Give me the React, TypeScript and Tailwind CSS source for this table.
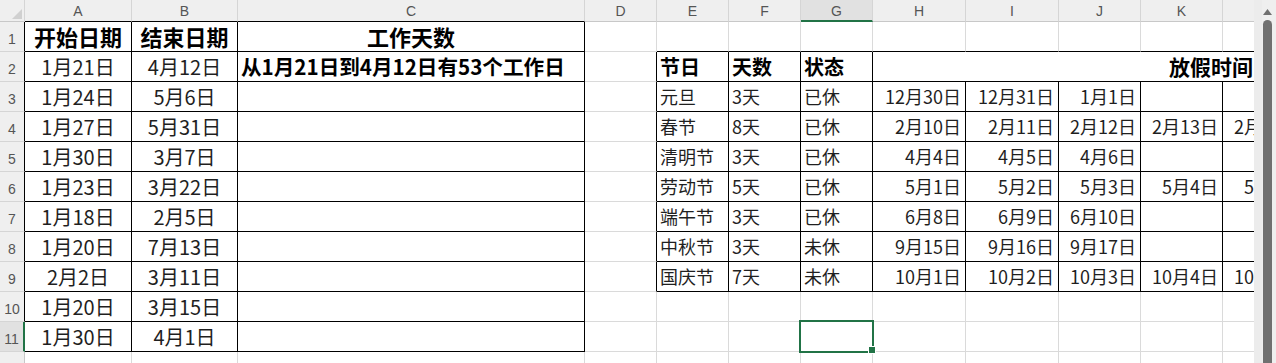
import React from 'react';

type Align = 'left' | 'center' | 'right';

interface Col {
  key: string;
  w: string;
}

interface CellSpec {
  text: string;
  align: Align;
  font: string;
}

const COLS: Col[] = [
  { key: 'A', w: 'w-[107px]' },
  { key: 'B', w: 'w-[106px]' },
  { key: 'C', w: 'w-[347px]' },
  { key: 'D', w: 'w-[72px]' },
  { key: 'E', w: 'w-[72px]' },
  { key: 'F', w: 'w-[72px]' },
  { key: 'G', w: 'w-[72px]' },
  { key: 'H', w: 'w-[93px]' },
  { key: 'I', w: 'w-[93px]' },
  { key: 'J', w: 'w-[82px]' },
  { key: 'K', w: 'w-[82px]' },
  { key: 'L', w: 'w-[82px]' },
];

const ROWS = [1, 2, 3, 4, 5, 6, 7, 8, 9, 10, 11, 12];

// 左表 A1:C11
const leftTable: string[][] = [
  ['开始日期', '结束日期', '工作天数'],
  ['1月21日', '4月12日', '从1月21日到4月12日有53个工作日'],
  ['1月24日', '5月6日', ''],
  ['1月27日', '5月31日', ''],
  ['1月30日', '3月7日', ''],
  ['1月23日', '3月22日', ''],
  ['1月18日', '2月5日', ''],
  ['1月20日', '7月13日', ''],
  ['2月2日', '3月11日', ''],
  ['1月20日', '3月15日', ''],
  ['1月30日', '4月1日', ''],
];

// 右表 E3:L9
const holidays: string[][] = [
  ['元旦', '3天', '已休', '12月30日', '12月31日', '1月1日', '', ''],
  ['春节', '8天', '已休', '2月10日', '2月11日', '2月12日', '2月13日', '2月14日'],
  ['清明节', '3天', '已休', '4月4日', '4月5日', '4月6日', '', ''],
  ['劳动节', '5天', '已休', '5月1日', '5月2日', '5月3日', '5月4日', '5月5日'],
  ['端午节', '3天', '已休', '6月8日', '6月9日', '6月10日', '', ''],
  ['中秋节', '3天', '未休', '9月15日', '9月16日', '9月17日', '', ''],
  ['国庆节', '7天', '未休', '10月1日', '10月2日', '10月3日', '10月4日', '10月5日'],
];

const inLeft = (r: number, c: number) => r >= 1 && r <= 11 && c >= 0 && c <= 2;
const inRight = (r: number, c: number) => r >= 2 && r <= 9 && c >= 4 && c <= 12;
const inTable = (r: number, c: number) => inLeft(r, c) || inRight(r, c);

const DATA = 'text-[20px] text-[#1f1f1f]';
const HEAD = 'text-[22px] font-bold text-black';
const NOTE = 'text-[20.6px] font-bold text-black';
const R_HEAD = 'text-[20px] font-bold text-black';
const R_DATA = 'text-[18px] text-[#1f1f1f]';

const getCell = (r: number, c: number): CellSpec | null => {
  if (inLeft(r, c)) {
    const text = leftTable[r - 1][c];
    if (r === 1) return { text, align: 'center', font: HEAD };
    if (c === 2) return { text, align: 'left', font: NOTE };
    return { text, align: 'center', font: DATA };
  }
  if (r === 2 && c >= 4 && c <= 6) {
    return { text: ['节日', '天数', '状态'][c - 4], align: 'left', font: R_HEAD };
  }
  if (r >= 3 && r <= 9 && c >= 4) {
    const text = holidays[r - 3][c - 4];
    return { text, align: c <= 6 ? 'left' : 'right', font: R_DATA };
  }
  return null;
};

const alignClass = (a: Align) =>
  a === 'left' ? 'justify-start pl-[3px]' : a === 'right' ? 'justify-end pr-[4px]' : 'justify-center';

const ColumnHeader: React.FC = () => (
  <div className="flex h-[22px] shrink-0">
    <div className="relative w-[25px] shrink-0 h-full bg-[#efefef] border-r border-b border-r-[#d5d5d5] border-b-[#c8c8c8]">
      <svg className="absolute left-[12px] top-[9px]" width="10" height="10" viewBox="0 0 10 10">
        <polygon points="10,0 10,10 0,10" fill="#d0d0d0" />
      </svg>
    </div>
    {COLS.map((col, c) => {
      const selected = col.key === 'G';
      const bottom = selected
        ? 'border-b-2 border-b-[#217346] bg-[#e1e1e1]'
        : inLeft(1, c)
          ? 'border-b border-b-black bg-[#efefef]'
          : 'border-b border-b-[#c8c8c8] bg-[#efefef]';
      return (
        <div
          key={col.key}
          className={`flex shrink-0 h-full items-center justify-center pt-[1px] leading-none border-r border-r-[#d5d5d5] text-[14px] text-[#555] font-['Liberation_Sans',sans-serif] ${col.w} ${bottom}`}
        >
          {/* L 列的字母在可见区域之外 */}
          {col.key === 'L' ? '' : col.key}
        </div>
      );
    })}
  </div>
);

const RowHeader: React.FC<{ r: number }> = ({ r }) => {
  const selected = r === 11;
  const right = selected
    ? 'border-r-2 border-r-[#217346] bg-[#e1e1e1]'
    : inLeft(r, 0)
      ? 'border-r border-r-black bg-[#efefef]'
      : 'border-r border-r-[#c8c8c8] bg-[#efefef]';
  return (
    <div
      className={`flex shrink-0 w-[25px] h-full items-end justify-center pb-[5px] leading-none border-b border-b-[#d5d5d5] text-[14px] text-[#555] font-['Liberation_Sans',sans-serif] ${right}`}
    >
      {r}
    </div>
  );
};

const SheetRow: React.FC<{ r: number }> = ({ r }) => {
  const cells: React.ReactNode[] = [];
  for (let c = 0; c < COLS.length; c++) {
    const col = COLS[c];

    // 合并单元格 H2:L2 「放假时间」
    if (r === 2 && c === 7) {
      cells.push(
        <div
          key="merged"
          className="flex shrink-0 h-full w-[432px] items-center justify-end pr-[51px] leading-tight border-r border-b border-r-black border-b-black text-[21px] font-bold text-black whitespace-nowrap"
        >
          放假时间
        </div>,
      );
      c = COLS.length;
      continue;
    }

    const spec = getCell(r, c);
    const blackRight = inTable(r, c) || inTable(r, c + 1);
    const blackBottom = inTable(r, c) || inTable(r + 1, c);
    cells.push(
      <div
        key={col.key}
        className={`flex shrink-0 h-full items-center whitespace-nowrap leading-tight border-r border-b ${col.w} ${
          blackRight ? 'border-r-black' : 'border-r-[#dadada]'
        } ${blackBottom ? 'border-b-black' : 'border-b-[#dadada]'} ${
          spec ? `${alignClass(spec.align)} ${spec.font}` : ''
        }`}
      >
        {spec?.text}
      </div>,
    );
  }
  return (
    <div className="flex h-[30px] shrink-0">
      <RowHeader r={r} />
      {cells}
    </div>
  );
};

const ScrollBar: React.FC = () => (
  <div className="flex w-[22px] shrink-0 h-full bg-[#efefef]">
    <div className="w-[8px] shrink-0 h-full bg-[#ececec]" />
    <div className="flex flex-col items-center w-[10px] shrink-0 h-full">
      <svg className="mt-[9px] mb-[5px]" width="9" height="6" viewBox="0 0 9 6">
        <polygon points="4.5,0 9,6 0,6" fill="#707070" />
      </svg>
      <div className="w-[9px] flex-1 rounded-t-[5px] bg-[#707070]" />
    </div>
  </div>
);

const App: React.FC = () => {
  return (
    <div className="flex w-[1276px] h-[363px] overflow-hidden bg-white font-['Noto_Sans_CJK_SC','Noto_Sans',sans-serif]">
      <div className="relative w-[1254px] shrink-0 h-full overflow-hidden">
        <ColumnHeader />
        {ROWS.map((r) => (
          <SheetRow key={r} r={r} />
        ))}

        {/* 选中单元格 G11 */}
        <div className="absolute left-[799px] top-[320px] w-[75px] h-[33px] border-2 border-[#217346]" />
        <div className="absolute left-[869px] top-[347px] w-[6px] h-[6px] bg-[#217346] outline outline-1 outline-white" />
      </div>
      <ScrollBar />
    </div>
  );
};

export default App;
